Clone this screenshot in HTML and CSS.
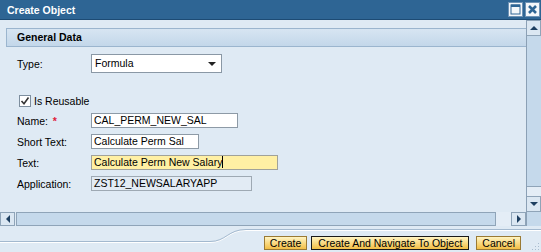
FILE: index.html
```html
<!DOCTYPE html>
<html lang="en">
<head>
    <meta charset="UTF-8">
    <title>Create Object</title>
    <link rel="stylesheet" href="styles.css">
</head>
<body>
    <div class="dialog">
        <div class="titlebar">
            <span class="title">Create Object</span>
            <div class="tbtns">
                <span class="tbtn">
                    <svg width="13" height="13" viewBox="0 0 13 13"><rect x="2" y="2" width="9" height="9" fill="none" stroke="#2e6594" stroke-width="1"/><rect x="2" y="1.5" width="9" height="2.5" fill="#2e6594"/></svg>
                </span>
                <span class="tbtn">
                    <svg width="13" height="13" viewBox="0 0 13 13"><path d="M3 3 L10 10 M10 3 L3 10" stroke="#2e6594" stroke-width="2.6"/></svg>
                </span>
            </div>
        </div>
        <div class="main">
            <div class="content">
                <div class="section">General Data</div>
                <div class="form">
                    <div class="row row_type">
                        <span class="label">Type:</span>
                        <div class="select">Formula<span class="sel_arrow"></span></div>
                    </div>
                    <div class="row row_check">
                        <span class="check">
                            <svg width="10" height="10" viewBox="0 0 10 10"><path d="M1.5 5 L4 7.8 L8.5 1.5" fill="none" stroke="#333" stroke-width="1.6"/></svg>
                        </span>
                        <span>Is Reusable</span>
                    </div>
                    <div class="row">
                        <span class="label">Name: <span class="req">*</span></span>
                        <div class="field w_name">CAL_PERM_NEW_SAL</div>
                    </div>
                    <div class="row">
                        <span class="label">Short Text:</span>
                        <div class="field w_short">Calculate Perm Sal</div>
                    </div>
                    <div class="row">
                        <span class="label">Text:</span>
                        <div class="field field_focus w_text">Calculate Perm New Salary<span class="caret"></span></div>
                    </div>
                    <div class="row">
                        <span class="label">Application:</span>
                        <div class="field field_ro w_app">ZST12_NEWSALARYAPP</div>
                    </div>
                </div>
            </div>
            <div class="vscroll">
                <div class="sbtn"><span class="tri tri_up"></span></div>
                <div class="vthumb"></div>
                <div class="vtrack"></div>
                <div class="sbtn"><span class="tri tri_down"></span></div>
            </div>
        </div>
        <div class="hrow">
            <div class="hscroll">
                <div class="sbtn hbtn"><span class="tri tri_left"></span></div>
                <div class="hthumb"></div>
                <div class="htrack"></div>
                <div class="sbtn hbtn"><span class="tri tri_right"></span></div>
            </div>
            <div class="corner"></div>
        </div>
        <div class="footer">
            <svg class="curve" width="541" height="26" viewBox="0 0 541 26">
                <path d="M0 16.5 H210 C226 16.5 228 4.5 246 4.5 H541" fill="none" stroke="#fff" stroke-width="1"/>
                <path d="M0 15.5 H210 C226 15.5 228 3.5 246 3.5 H541" fill="none" stroke="#a3b9cf" stroke-width="1"/>
            </svg>
            <div class="buttons">
                <span class="btn">Create</span>
                <span class="btn btn_default">Create And Navigate To Object</span>
                <span class="btn">Cancel</span>
            </div>
            <svg class="grip" width="11" height="11" viewBox="0 0 11 11">
                <rect x="8" y="2" width="1" height="1" fill="#a9bccf"/>
                <rect x="5" y="5" width="1" height="1" fill="#a9bccf"/>
                <rect x="8" y="5" width="1" height="1" fill="#a9bccf"/>
                <rect x="2" y="8" width="1" height="1" fill="#a9bccf"/>
                <rect x="5" y="8" width="1" height="1" fill="#a9bccf"/>
                <rect x="8" y="8" width="1" height="1" fill="#a9bccf"/>
            </svg>
        </div>
    </div>
</body>
</html>
```

FILE: styles.css
```css
body{
    margin:0;
    font-family:"Liberation Sans", Arial, sans-serif;
    font-size:10.5px;
    color:#000;
}
.dialog{
    width:541px;
    height:252px;
    background:#dfeaf4;
    display:flex;
    flex-direction:column;
    overflow:hidden;
}
.titlebar{
    height:19px;
    flex:none;
    border-bottom:1px solid #1d4b74;
    background:#2e6594;
    display:flex;
    align-items:center;
    justify-content:space-between;
}
.title{
    color:#fff;
    font-weight:bold;
    padding-left:7px;
}
.tbtns{
    display:flex;
    gap:2px;
    padding-right:1px;
}
.tbtn{
    width:15px;
    height:15px;
    box-sizing:border-box;
    border:1px solid #6f93b5;
    background:#f4f7fa;
    display:flex;
    align-items:center;
    justify-content:center;
}
.main{
    height:192px;
    flex:none;
    display:flex;
}
.content{
    flex:1;
    padding-top:8px;
}
.section{
    margin-left:6px;
    height:17px;
    line-height:17px;
    border:1px solid #9bb5ce;
    border-right:none;
    background:linear-gradient(#d7e5f2, #c3d7ea);
    font-weight:bold;
    padding-left:10px;
}
.form{
    padding-left:17px;
}
.row{
    display:flex;
    align-items:center;
    height:15px;
    margin-top:6px;
}
.label{
    width:74px;
    flex:none;
}
.req{
    color:#e0203a;
    font-weight:bold;
    padding-left:2px;
}
.row_type{
    margin-top:7px;
    height:19px;
}
.select{
    width:131px;
    height:19px;
    box-sizing:border-box;
    border:1px solid #8a98a5;
    background:#fff;
    padding-left:3px;
    line-height:17px;
    position:relative;
}
.sel_arrow{
    position:absolute;
    right:5px;
    top:7px;
    border-left:4px solid transparent;
    border-right:4px solid transparent;
    border-top:4px solid #222;
}
.row_check{
    margin-top:22px;
    height:12px;
    padding-left:2px;
}
.check{
    width:12px;
    height:12px;
    box-sizing:border-box;
    border:1px solid #7d8e9e;
    background:#fff;
    display:flex;
    align-items:center;
    justify-content:center;
    margin-right:3px;
}
.field{
    height:15px;
    box-sizing:border-box;
    border:1px solid #8d9aa6;
    background:#fff;
    padding-left:2px;
    line-height:13px;
    white-space:nowrap;
}
.field_focus{
    background:#fff0a4;
    border-color:#a0a29a;
}
.field_ro{
    background:#e2ebf4;
    border-color:#9ea9b3;
}
.caret{
    display:inline-block;
    width:1px;
    height:12px;
    background:#000;
    vertical-align:top;
}
.w_name{ width:147px; }
.w_short{ width:108px; }
.w_text{ width:187px; }
.w_app{ width:161px; }
.vscroll{
    width:14px;
    display:flex;
    flex-direction:column;
    border-left:1px solid #8ba0b5;
}
.sbtn{
    height:16px;
    box-sizing:border-box;
    border:1px solid #8fa4b8;
    border-left:none;
    background:#dbe7f2;
    display:flex;
    align-items:center;
    justify-content:center;
    flex:none;
}
.vthumb{
    height:150px;
    background:#c5d9eb;
    border-bottom:1px solid #8fa4b8;
}
.vtrack{
    flex:1;
    background:#e4edf6;
}
.tri{
    width:0;
    height:0;
}
.tri_up{
    border-left:4px solid transparent;
    border-right:4px solid transparent;
    border-bottom:4px solid #1e3f60;
}
.tri_down{
    border-left:4px solid transparent;
    border-right:4px solid transparent;
    border-top:4px solid #1e3f60;
}
.tri_left{
    border-top:4px solid transparent;
    border-bottom:4px solid transparent;
    border-right:4px solid #1e3f60;
}
.tri_right{
    border-top:4px solid transparent;
    border-bottom:4px solid transparent;
    border-left:4px solid #1e3f60;
}
.hrow{
    height:14px;
    flex:none;
    display:flex;
}
.hscroll{
    flex:1;
    display:flex;
}
.hbtn{
    width:15px;
    height:14px;
    border:1px solid #8fa4b8;
}
.hthumb{
    width:480px;
    box-sizing:border-box;
    border:1px solid #8fa4b8;
    background:#c5d9eb;
    margin-left:1px;
}
.htrack{
    flex:1;
    background:#e4edf6;
}
.corner{
    width:14px;
    background:#c5d9eb;
    border-left:1px solid #8ba0b5;
}
.footer{
    flex:1;
    position:relative;
    display:flex;
    justify-content:flex-end;
    align-items:flex-start;
}
.curve{
    position:absolute;
    left:0;
    top:0;
}
.buttons{
    display:flex;
    gap:4px;
    margin-top:10px;
    margin-right:20px;
    position:relative;
}
.btn{
    height:14px;
    box-sizing:border-box;
    border:1px solid #9a7a34;
    background:linear-gradient(#fff4c2, #f9d77c 55%, #f2be45);
    padding:0 5px;
    line-height:12px;
    white-space:nowrap;
}
.btn_default{
    border-color:#1a1a1a;
    margin-right:3px;
    padding:0 6px;
}
.grip{
    position:absolute;
    right:0;
    bottom:0;
}
```
